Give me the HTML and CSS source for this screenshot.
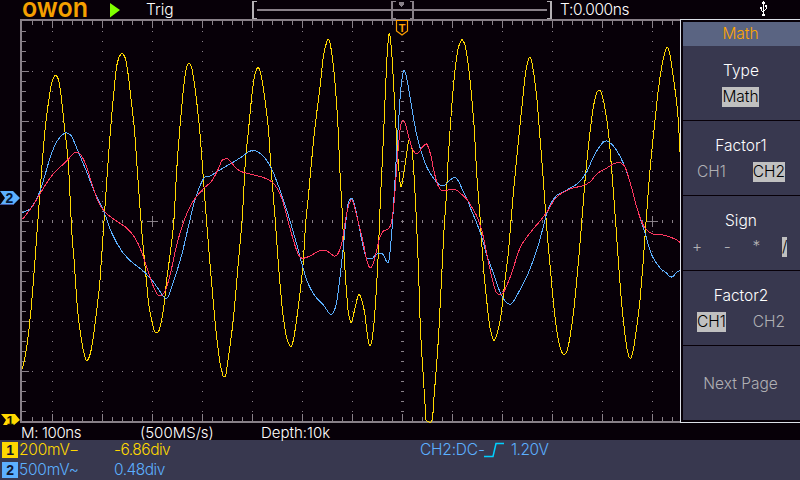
FILE: index.html
```html
<!DOCTYPE html>
<html lang="en">
<head>
  <meta charset="UTF-8" />
  <meta name="viewport" content="width=device-width, initial-scale=1.0" />
  <title>OWON Oscilloscope</title>
  <link rel="stylesheet" href="styles.css">
</head>
<body>
  <div class="topbar">
    <svg class="logo" viewBox="0 0 68 19"><text x="0" y="16.5" textLength="66" lengthAdjust="spacingAndGlyphs">owon</text></svg>
    <svg class="run" viewBox="0 0 10 15"><path d="M0 0L10 7L0 14.5Z"/></svg>
    <span class="status">Trig</span>
    <svg class="memory" viewBox="252 0 300 19" shape-rendering="crispEdges">
      <path class="mem-line" d="M257 9h290v2H257z"/>
      <path class="mem-end" d="M252 1h5v1h-3v16h3v1h-5zM551 1h-4v1h3v16h-3v1h5V1z"/>
      <path class="mem-line" d="M391 1h5v1h-3v16h3v1h-5zM414 1h-4v1h2v16h-2v1h4z"/>
      <path class="mem-line" d="M399 2h5v3h-1v1h-1v1h-1v-1h-1v-1h-1z"/>
    </svg>
    <span class="trig-time">T:0.000ns</span>
    <svg class="usb" viewBox="0 0 9 17" shape-rendering="crispEdges">
      <path d="M3 1h1v15h-1zM2 2h3v2h-3zM0 7h2v2h-2zM1 9h1v2h-1zM2 11h1v1h-1zM5 5h2v2h-2zM6 7h1v2h-1zM5 9h1v1h-1zM4 10h1v1h-1zM2 14h3v2h-3z"/>
    </svg>
  </div>

  <div class="main">
    <svg class="plot" viewBox="0 19 680 404">
      <g id="grid" shape-rendering="crispEdges"></g>
      <g id="traces" shape-rendering="crispEdges"></g>

      <!-- trigger position -->
      <path class="trig-flag" d="M396.500 20.500H407.500V31L402 35L396.500 31Z"/>
      <text class="trig-t" x="402" y="31.500">T</text>

      <!-- channel zero markers -->
      <path class="flag2" d="M0 191H13L20 198L13 205H0L5 198Z"/>
      <path class="flag2-shadow" d="M0 204.500H14" />
      <text class="flag2-num" x="9.500" y="203">2</text>
      <path class="flag1" d="M1 414H15L20 420L14 425H3L6 420Z"/>
      <text class="flag1-num" x="10" y="424.500">1</text>
    </svg>

    <div class="menu">
      <div class="menu-title">Math</div>
      <div class="menu-item">
        <div class="name">Type</div>
        <div class="options"><span class="selected">Math</span></div>
      </div>
      <div class="menu-item">
        <div class="name">Factor1</div>
        <div class="options pair"><span>CH1</span><span class="selected">CH2</span></div>
      </div>
      <div class="menu-item">
        <div class="name">Sign</div>
        <div class="options signs"><span>+</span><span>-</span><span>*</span><span class="selected">/</span></div>
      </div>
      <div class="menu-item">
        <div class="name">Factor2</div>
        <div class="options pair"><span class="selected">CH1</span><span>CH2</span></div>
      </div>
      <div class="menu-item next">Next Page</div>
    </div>
  </div>

  <div class="acquire">
    <span class="timebase">M: 100ns</span>
    <span class="rate">(500MS/s)</span>
    <span class="depth">Depth:10k</span>
  </div>

  <div class="channels">
    <div class="row ch1">
      <span class="badge">1</span>
      <span class="scale">200mV−</span>
      <span class="offset">-6.86div</span>
      <span class="trigger">CH2:DC-</span>
      <svg class="edge" viewBox="0 0 20 16"><path d="M0 14.500H9L12 1.500H20"/></svg>
      <span class="level">1.20V</span>
    </div>
    <div class="row ch2">
      <span class="badge">2</span>
      <span class="scale">500mV~</span>
      <span class="offset">0.48div</span>
    </div>
  </div>

  <script src="scope.js"></script>
</body>
</html>
```
FILE: styles.css
```css
* { box-sizing: border-box; }
body {
  margin: 0;
  width: 800px;
  height: 480px;
  overflow: hidden;
  background: #070008;
  color: #fff;
  font-family: Inter, "Liberation Sans", sans-serif;
  font-size: 15.5px;
  font-weight: 300;
  line-height: 20px;
  white-space: nowrap;
}
svg { display: block; }

/* top bar */
.topbar {
  display: grid;
  grid-template-columns: 88px 36px 106px 308px 200px 9px;
  padding-left: 22px;
  height: 19px;
}
.logo { width: 68px; height: 19px; overflow: visible; }
.logo text {
  font-family: Inter, sans-serif;
  font-size: 27px;
  font-weight: 600;
  fill: #f5a000;
}
.run { width: 10px; height: 15px; margin-top: 3px; fill: #80ff00; }
.memory { width: 300px; height: 19px; }
.mem-line { fill: #888088; }
.mem-end { fill: #b4b0b4; }
.trig-time { letter-spacing: -0.4px; }
.usb { width: 9px; height: 17px; fill: #fff; }

/* plot area */
.main { display: flex; height: 404px; }
.plot { width: 680px; height: 404px; overflow: visible; }
.grid-line { fill: #888088; }
.trace { fill: none; stroke-width: 1; }
.trace.yellow { stroke: #ffd900; }
.trace.blue { stroke: #5cb0ff; }
.trace.red { stroke: #ff3860; }
.trig-flag { fill: #070008; stroke: #ffa000; stroke-width: 1.2; }
.plot text { text-anchor: middle; font-family: "Liberation Sans", sans-serif; }
.plot .trig-t { font-size: 11px; font-weight: 700; fill: #ffa000; }
.flag1 { fill: #ffd800; }
.flag2 { fill: #5cb0ff; }
.flag2-shadow { stroke: #4858a0; }
.plot .flag1-num { font-size: 13px; font-weight: 700; fill: #181400; }
.plot .flag2-num { font-size: 14px; font-weight: 700; fill: #041838; }

/* side menu */
.menu {
  width: 120px;
  height: 404px;
  padding: 2px 0 2px 2px;
  border: solid #dce0e8;
  border-width: 1px 0 1px 1px;
  text-align: center;
}
.menu-title {
  height: 24px;
  line-height: 23px;
  padding-right: 2px;
  background: #5a6482;
  color: #ffa500;
}
.menu-item {
  height: 74px;
  margin-bottom: 1px;
  padding-top: 15px;
  background: #38384f;
}
.name { padding-right: 1px; }
.options {
  display: flex;
  justify-content: center;
  margin-top: 6px;
  padding-right: 2px;
  color: #b0b0b4;
}
.options.pair { justify-content: space-between; padding: 0 15px 0 14px; }
.options.signs { justify-content: space-between; padding: 0 13px 0 9px; }
.options .selected { background: #c0c0c0; color: #000; height: 20px; }
.signs .selected { width: 5px; }
.next { padding-top: 28px; padding-right: 2px; color: #b0b0b4; }

/* timebase line */
.acquire {
  display: grid;
  grid-template-columns: 119px 121px 100px;
  padding-left: 21px;
  height: 17px;
  line-height: 19px;
  font-size: 15px;
}
.timebase { letter-spacing: -0.35px; }

/* channel readouts */
.channels { height: 40px; background: #38384f; }
.row {
  display: grid;
  grid-template-columns: 17px 95px 306px 64px 27px 80px;
  padding-left: 2px;
  height: 20px;
  letter-spacing: -0.2px;
}
.ch1 { color: #ffd800; }
.ch2 { color: #5cb0ff; }
.badge {
  width: 16px;
  height: 16px;
  margin-top: 2px;
  line-height: 16px;
  text-align: center;
  font-family: "Liberation Sans", sans-serif;
  font-weight: 700;
  font-size: 14px;
  color: #10142c;
}
.ch1 .badge { background: #ffd800; }
.ch2 .badge { background: #5cb0ff; }
.offset { letter-spacing: -0.5px; }
.trigger, .level { color: #5cb0ff; }
.level { letter-spacing: -0.5px; }
.edge {
  width: 20px;
  height: 16px;
  margin-top: 2px;
  fill: none;
  stroke: #00d0ff;
  stroke-width: 1.5;
}
```
FILE: scope.js
```js
const NS = 'http://www.w3.org/2000/svg';

// Graticule: frame, edge ticks and dotted divisions
let g = '';
const box = (x, y, w, h) => { g += `M${x} ${y}h${w}v${h}h${-w}z`; };

box(20, 19, 660, 2);
box(20, 421, 660, 2);
box(20, 21, 2, 400);

for (let x = 32; x < 680; x += 10) {
  const major = (x - 2) % 50 === 0;
  const len = major ? 7 : 4;
  box(x, 21, 1, len);
  box(x, 421 - len, 1, len);
  box(x, 220, 1, 3);
  for (let y = 71; y < 420; y += 50) {
    if (y !== 221) box(x, y, 1, 1);
  }
}
for (let y = 31; y < 420; y += 10) {
  box(22, y, (y - 21) % 50 === 0 ? 7 : 4, 1);
  box(401, y, 3, 1);
  for (let x = 52; x < 680; x += 50) box(x, y, 1, 1);
}
[152, 652].forEach(x => { box(x - 5, 221, 11, 1); box(x, 216, 1, 11); });

const grid = document.createElementNS(NS, 'path');
grid.setAttribute('class', 'grid-line');
grid.setAttribute('d', g);
document.getElementById('grid').appendChild(grid);

// Sampled traces
const traces = {
  yellow: `22,369 24,362 27,345 31,310 35,260 40,192 45,130 50,92 52.5,80 55.5,75.5 58.5,80 61,95 64.8,130 68.3,163
    71.7,230 74.3,263 77.3,307 80,330 83.3,350 86.7,360.5 90.7,352 94.3,330 97.3,305 100,280 104.3,217 107.3,173 110.5,130
    115,80 117.3,63 120.5,54.5 123.5,54.5 126,61 128.5,77 131.5,103 134.5,130 138,180 141.7,230 145.7,273 148.7,304
    151.7,320 154.3,330.5 156.7,332.5 159,330.5 162,318 164.3,303 166.7,280 170,255 173.7,223 176.7,170 179.7,130
    183.7,87 186.5,68 189,63.5 191.7,68 194.3,83 197.3,107 200,134 204,187 206.7,223 210.7,272 214,310 216.7,337
    220,363 222.7,375 224.3,377 226,374 229,353 232.7,325 235.3,298 238.3,263 242.3,217 245.3,163 248.5,130 251.7,97
    254.3,77 257,68.5 259,68.5 262,80 265,100 268.5,130 270.7,163 275,217 278.3,263 281.7,303 283.7,320 286.7,338
    289.7,345.5 292,345 294.3,335 297.5,313 300,293 303,265 305.7,223 308.7,193 311.7,160 315,127 320,87 323.3,57
    326.7,42 328.2,39.5 330,43 332.7,60 335,83 337.8,123 340,173 342.3,213 344.3,258 347,298 348.3,312 350.7,322 352.3,320
    355,308 358,296 359.7,295 362,301 364.7,313 366.7,330 368.7,343 370.7,345 372.3,338 374.3,320 376.3,290
    378.3,253 380.5,197 382.7,153 384.3,117 386.7,63 388.7,36 390,36 392,57 394.3,97 396.7,140 398.3,163
    400.3,184 401.8,185 404.3,170 406.7,153 409,140 411,145 412.5,153 414.3,180 416.3,217 418.5,270 420.5,330
    423.3,377 425.7,415 426.7,420.5 432,420.5 434,397 436.7,363 438.9,330 441.8,273 444,230 446.3,197 448.3,157
    451.7,107 455,70 458.3,48 461.3,40.5 462.7,40.5 465.7,48 470,80 474,125 476.7,173 480,217 483.7,270
    487.5,308 490,328 493.3,339.5 494.7,339.5 497.3,333 500.7,317 503,298 505.3,278 508.3,253 511.3,217 514.3,183
    519.5,130 523.3,93 526,70 529.3,57.5 531.7,62 534.3,77 537,100 539.4,130 543.3,180 546.7,227 550,265
    554,308 558.3,340 561.7,352 564,354.5 566.7,352 570,337 574,308 578.3,263 582.7,210 585.7,173 590.3,130
    593.3,107 596.7,93 599,90.2 601,92 604,103 608.2,130 611.7,170 615.7,223 619,270 622.5,312 626.7,347
    630.2,358.5 633.3,350 636.7,327 639.8,302 643.3,260 646.7,213 650,170 654,130 658.3,90 661.7,67 665,52
    667.4,47.5 670,55 673.3,77 676.7,103 678.8,128 679.5,152`,
  blue: `22,213 26,211 30,209 35,202 40,191 45,175 50,158 55,145 60,137 64.5,133.3 68,133.3 72,137 78.3,152 86.7,172
    95,193 104,212 111.7,233 121.7,251 131.7,262 143.3,271 153.3,282 160,291.5 164,297 166.7,298.3 169.3,294 175,277
    181.7,255 188.3,227 195,200 203.3,179 210,176 218.3,171 230,164 240,158 248.3,152 253.3,150.5 258.3,152 265,158
    271.7,169 280,190 286.7,210 295,238 303.3,269 308.3,284 315,296 323.3,305 329.3,313.5 331.3,314.5 333.7,312
    336.7,302 340,277 343.3,247 345.7,223 348.3,203 351,198.5 353.3,201 357.3,217 361.7,240 366,257 368.3,258.5
    372.3,258.5 375.7,254.5 381.7,253.5 384,256 387.3,262.5 389.3,258 391.7,233 393.3,210 395,180 396.7,150
    398.7,120 400.7,90 403.3,72 405,72 407.7,83 411.7,107 416.7,135 421.7,153 426.7,167 433.3,178 440,185 445,185
    450,180 455,177.5 459,182 463.3,192 467.7,200 470,207 476.7,223 481.7,237 486.7,255 493.3,273 500,292 505,301
    509,304 512.3,303 518.3,293 528.3,273 538.3,245 546.7,214 551.7,202 557.3,195 566.7,190 578.3,183 586.7,172
    593.3,157 600,146 604.3,141.5 608.3,141.5 615,148 623.3,163 630,182 636.7,207 645,233 651.7,255 660,268
    666.7,273 669.3,276.5 673,276.5 677.3,271.5 680,271`,
  red: `22,218.5 24,217.5 28,212 33.3,205 41.7,191 50,178 58,169 66.7,161 73.3,153.5 77,152.3 81,155 86,165 91.7,183
    98.3,202 105,212 115,220 126.7,228 135,238 141.7,252 148.3,272 154,288 157.3,294.5 160,296 163.3,294 166.7,287
    171.7,268 176.7,245 185,218 193.3,201 203.3,189 211.7,181 217.3,171 221.7,161 225,159 227.7,158.5 233.3,165
    240,171 250,174 261.7,177 269,180 275,185 281.7,198 288.3,222 293.3,240 297.3,252 300,257 303.3,258.3 310,256
    316.7,252 321.7,250.5 326.7,251 334.3,256 337.7,254 340.7,247 343.3,235 346.7,213 350.7,200.5 353.3,202.5
    358.3,222 363.3,243 366.7,260 370.3,268 374,261 376.7,250 380,237 383.3,231 387.3,229.5 390.7,225 393.3,210
    395.3,187 397.3,160 400,130 402.3,121 404.7,122 408.3,135 411.7,147 415,153 418.3,153 421.7,148 425,144.5
    427.3,145 430.7,155 433.3,168 436.7,182 440,189 443.3,190.5 455,189.5 460,193 466.7,199 470,204 476.7,216
    481.7,230 486,250 491.7,277 496,292 500,294.5 504,291.5 511.7,273 520,248 530,233 541.7,219 548.3,210 556.7,197
    570,189 581.7,186 590,182 596.7,174 606.7,168 613.3,164 617.7,162.5 620.7,163 625,167 630,182 636.7,207
    641.7,222 646.7,230 653.3,234 663.3,235 670,237 676.7,240 680,242.5`
};

// Catmull-Rom through the samples
function smooth(pts) {
  let d = `M${pts[0]}`;
  for (let i = 0; i < pts.length - 1; i++) {
    const a = pts[i - 1] || pts[i];
    const b = pts[i];
    const c = pts[i + 1];
    const e = pts[i + 2] || c;
    d += `C${b[0] + (c[0] - a[0]) / 6} ${b[1] + (c[1] - a[1]) / 6} `
       + `${c[0] - (e[0] - b[0]) / 6} ${c[1] - (e[1] - b[1]) / 6} ${c[0]} ${c[1]}`;
  }
  return d;
}

for (const name in traces) {
  const pts = traces[name].trim().split(/\s+/).map(p => p.split(',').map(Number));
  const path = document.createElementNS(NS, 'path');
  path.setAttribute('class', 'trace ' + name);
  path.setAttribute('d', smooth(pts));
  document.getElementById('traces').appendChild(path);
}
```
